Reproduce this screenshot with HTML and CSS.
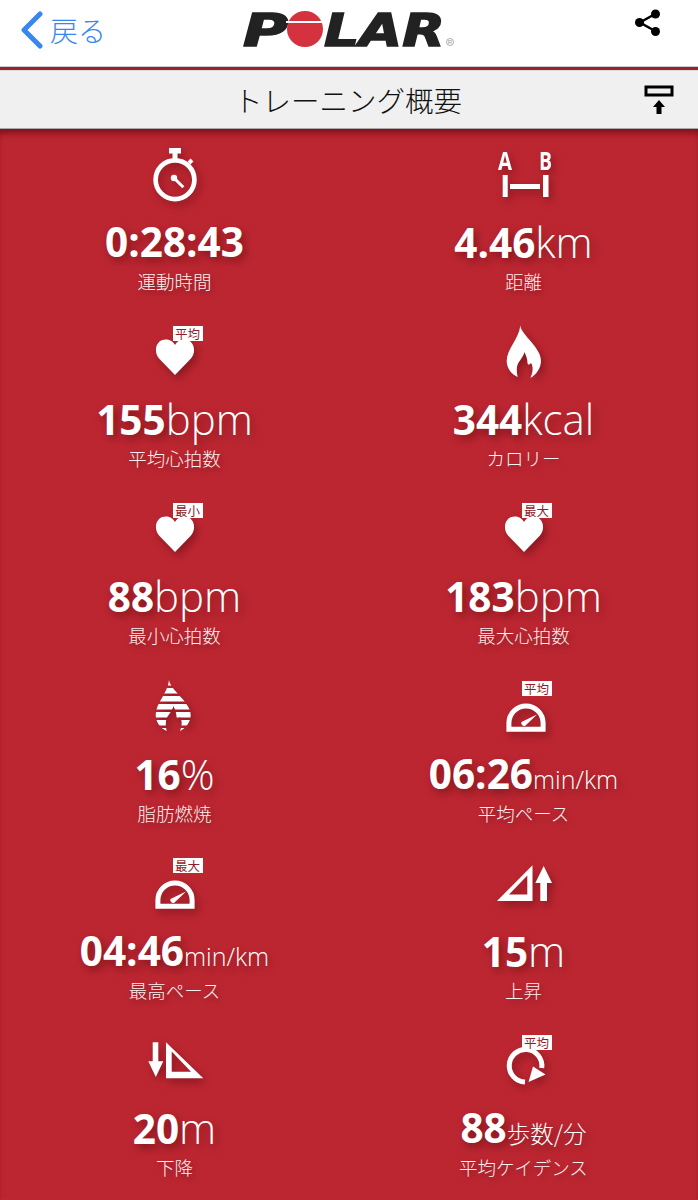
FILE: index.html
```html
<!DOCTYPE html>
<html lang="ja">
<head>
    <meta charset="UTF-8">
    <meta name="viewport" content="width=device-width, initial-scale=1.0">
    <title>トレーニング概要</title>
    <link rel="stylesheet" href="styles.css">
</head>
<body>

<svg class="defs" width="0" height="0">
    <symbol id="heart" viewBox="0 0 60 60">
        <path d="M30 54 L14.500 38 C8 31 10.500 18.500 21 18.500 C25.500 18.500 28.500 21 30 24 C31.500 21 34.500 18.500 39 18.500 C49.500 18.500 52 31 45.500 38 Z"/>
    </symbol>
    <symbol id="gauge" viewBox="0 0 60 60">
        <path d="M14.900 53.200 V47 A17.100 17.100 0 0 1 49.100 47 V53.200 Z" fill="none" stroke="#fff" stroke-width="5"/>
        <path d="M27.500 46 L43 38.500 L31 50 A3 3 0 0 1 27.500 46 Z"/>
    </symbol>
    <clipPath id="stripes">
        <path d="M24 4 C25 14 45.700 26 45.700 39 C45.700 46 41 52 35 55 C37 50 37.500 45 35 41 C33 43 32 43 31.500 41 C31.500 37 30 33 28.300 30 C28 35 22 39 21 45 C20.500 49 21 52 21.700 55 C15 52 10.700 46 10.700 39 C10.700 27 23 17 24 4 Z"/>
    </clipPath>
</svg>

<!-- Cabecera -->
<header class="topbar">
    <a class="back">
        <svg class="back-icon" width="24" height="38" viewBox="0 0 24 38"><path d="M20 3 L4 19 L20 35" fill="none" stroke="currentColor" stroke-width="5" stroke-linecap="round" stroke-linejoin="round"/></svg>
        <span>戻る</span>
    </a>
    <svg class="logo" width="216" height="66" viewBox="0 -10 216 66">
        <text class="logo-text" transform="translate(0 36) scale(1.4 1)">P</text>
        <circle cx="62" cy="19" r="18" fill="#d4323f"/>
        <rect x="43" y="11" width="38" height="2" fill="#fff"/>
        <text class="logo-text" transform="translate(81 36) scale(1.26 1)">LAR</text>
        <circle cx="207" cy="32" r="3.500" fill="none" stroke="#999" stroke-width="0.800"/>
        <text class="logo-mark" x="207" y="34" text-anchor="middle">R</text>
    </svg>
    <svg class="share" width="28" height="28" viewBox="0 0 28 28">
        <path d="M21 5 L6 13.500 L21 22" fill="none" stroke="#000" stroke-width="2.500"/>
        <circle cx="21.500" cy="5" r="4.500"/>
        <circle cx="5.500" cy="13.500" r="4.500"/>
        <circle cx="21.500" cy="22.500" r="4.500"/>
    </svg>
</header>

<div class="titlebar">
    <h1>トレーニング概要</h1>
    <svg class="print" width="30" height="30" viewBox="0 0 30 30">
        <rect x="2" y="2" width="26" height="8" fill="none" stroke="#000" stroke-width="3"/>
        <path d="M15 15 L21 22 H17.500 V29 H12.500 V22 H9 Z"/>
    </svg>
</div>

<main class="stats">

    <div class="stat">
        <div class="stat-icon">
            <svg width="60" height="60" viewBox="0 0 60 60">
                <rect x="24" y="4" width="12" height="5.500"/>
                <rect x="27.500" y="9" width="5" height="7"/>
                <path d="M44 19 L47 16" stroke="#fff" stroke-width="4"/>
                <circle cx="30" cy="35.700" r="19.400" fill="none" stroke="#fff" stroke-width="4.700"/>
                <circle cx="29" cy="34" r="3.200"/>
                <path d="M29 34 L38.300 43.300" stroke="#fff" stroke-width="3"/>
            </svg>
        </div>
        <div class="stat-value"><b>0:28:43</b></div>
        <div class="stat-label">運動時間</div>
    </div>

    <div class="stat">
        <div class="stat-icon">
            <svg width="60" height="60" viewBox="0 0 60 60">
                <text class="ab" x="4" y="26" textLength="14" lengthAdjust="spacingAndGlyphs">A</text>
                <text class="ab" x="45" y="26" textLength="13" lengthAdjust="spacingAndGlyphs">B</text>
                <rect x="8.700" y="31" width="5" height="22"/>
                <rect x="49" y="31" width="5.500" height="22"/>
                <rect x="16" y="40" width="30" height="5"/>
            </svg>
        </div>
        <div class="stat-value"><b>4.46</b><span class="unit">km</span></div>
        <div class="stat-label">距離</div>
    </div>

    <div class="stat">
        <div class="stat-icon">
            <svg width="60" height="60"><use href="#heart"/></svg>
            <span class="badge">平均</span>
        </div>
        <div class="stat-value"><b>155</b><span class="unit">bpm</span></div>
        <div class="stat-label">平均心拍数</div>
    </div>

    <div class="stat">
        <div class="stat-icon">
            <svg width="60" height="60" viewBox="0 0 60 60">
                <path d="M26.300 4.500 C27 14 47 26 47 40 C47 47 42 54 36.300 57 C39 52 39.500 46 37 42 C35 44 34 44 33.500 42 C33.500 38 32 34 30.300 31 C30 36 24 40 23 46 C22.500 50 23 53 23.700 56 C17 53 12.700 47 12.700 40 C12.700 28 25 18 26.300 4.500 Z"/>
            </svg>
        </div>
        <div class="stat-value"><b>344</b><span class="unit">kcal</span></div>
        <div class="stat-label">カロリー</div>
    </div>

    <div class="stat">
        <div class="stat-icon">
            <svg width="60" height="60"><use href="#heart"/></svg>
            <span class="badge">最小</span>
        </div>
        <div class="stat-value"><b>88</b><span class="unit">bpm</span></div>
        <div class="stat-label">最小心拍数</div>
    </div>

    <div class="stat">
        <div class="stat-icon">
            <svg width="60" height="60"><use href="#heart"/></svg>
            <span class="badge">最大</span>
        </div>
        <div class="stat-value"><b>183</b><span class="unit">bpm</span></div>
        <div class="stat-label">最大心拍数</div>
    </div>

    <div class="stat">
        <div class="stat-icon">
            <svg width="60" height="60" viewBox="0 0 60 60">
                <g clip-path="url(#stripes)">
                    <rect x="8" y="4" width="40" height="5.500"/>
                    <rect x="8" y="12" width="40" height="5.500"/>
                    <rect x="8" y="20" width="40" height="5.500"/>
                    <rect x="8" y="28" width="40" height="5.500"/>
                    <rect x="8" y="36" width="40" height="5.500"/>
                    <rect x="8" y="44" width="40" height="5.500"/>
                    <rect x="8" y="52" width="40" height="3"/>
                </g>
            </svg>
        </div>
        <div class="stat-value"><b>16</b><span class="unit">%</span></div>
        <div class="stat-label">脂肪燃焼</div>
    </div>

    <div class="stat">
        <div class="stat-icon">
            <svg width="60" height="60"><use href="#gauge"/></svg>
            <span class="badge">平均</span>
        </div>
        <div class="stat-value"><b>06:26</b><small>min/km</small></div>
        <div class="stat-label">平均ペース</div>
    </div>

    <div class="stat">
        <div class="stat-icon">
            <svg width="60" height="60" viewBox="2 0 60 60"><use href="#gauge" width="60" height="60"/></svg>
            <span class="badge">最大</span>
        </div>
        <div class="stat-value"><b>04:46</b><small>min/km</small></div>
        <div class="stat-label">最高ペース</div>
    </div>

    <div class="stat">
        <div class="stat-icon">
            <svg width="60" height="60" viewBox="0 0 60 60">
                <path fill-rule="evenodd" d="M3 47.900 L38.500 12.200 V47.900 Z M15 41.500 H33.300 V22.500 Z"/>
                <path d="M49.700 13 L58 30 H53 V47.900 H46.300 V30 H41.300 Z"/>
            </svg>
        </div>
        <div class="stat-value"><b>15</b><span class="unit">m</span></div>
        <div class="stat-label">上昇</div>
    </div>

    <div class="stat">
        <div class="stat-icon">
            <svg width="60" height="60" viewBox="0 0 60 60">
                <path d="M7.700 12.300 H13.300 V31.300 H18.300 L10.800 47 L3.300 31.300 H7.700 Z"/>
                <path fill-rule="evenodd" d="M21 12.300 L58.300 48.300 H21 Z M26.700 21.500 V41.800 H46 Z"/>
            </svg>
        </div>
        <div class="stat-value"><b>20</b><span class="unit">m</span></div>
        <div class="stat-label">下降</div>
    </div>

    <div class="stat">
        <div class="stat-icon">
            <svg width="60" height="60" viewBox="0 0 60 60">
                <path d="M47.700 38 A16.300 16.300 0 1 0 31 52" fill="none" stroke="#fff" stroke-width="5"/>
                <path d="M34.500 52 L39 36.500 L51.500 44.500 Z"/>
            </svg>
            <span class="badge">平均</span>
        </div>
        <div class="stat-value"><b>88</b><small class="cjk">歩数/分</small></div>
        <div class="stat-label">平均ケイデンス</div>
    </div>

</main>

</body>
</html>
```

FILE: styles.css
```css
html, body { margin: 0; padding: 0; height: 1200px; overflow: hidden; }
body { font-family: "Open Sans", "Noto Sans CJK JP", sans-serif; background-color: #bc2631; }
.defs { position: absolute; }

/* Cabecera */
.topbar { position: relative; display: flex; justify-content: center; align-items: flex-start; height: 66px; background-color: #fff; border-bottom: 1px solid #c9c9c9; }
.back { position: absolute; left: 20px; top: 11px; display: flex; align-items: center; gap: 6px; color: #3a86f0; font-family: "Noto Sans CJK JP", sans-serif; font-size: 28px; font-weight: 300; line-height: 38px; }
.back-icon { display: block; }
.logo { margin-left: 3px; }
.logo-text { font-family: "DejaVu Sans", sans-serif; font-weight: 700; font-style: italic; font-size: 44px; fill: #222; stroke: #222; stroke-width: 1.5px; }
.logo-mark { font-family: "Liberation Sans", sans-serif; font-size: 6px; fill: #999; }
.share { position: absolute; right: 36px; top: 9px; }

.titlebar { position: relative; display: flex; justify-content: center; align-items: center; height: 58px; background-color: #f0f0f0; border-top: 3px solid #a51f2b; border-bottom: 1px solid #aaa; box-shadow: inset 0 1px 0 #ddd; }
.titlebar h1 { margin: 0 2px 0 0; font-family: "Noto Sans CJK JP", sans-serif; font-size: 28.500px; font-weight: 300; color: #111; }
.print { position: absolute; right: 24px; top: 15px; }

/* Cuadricula de datos */
.stats { display: grid; grid-template-columns: 349px 349px; grid-auto-rows: 177.2px; height: 1070px; box-shadow: inset 0 7px 7px -3px rgba(80, 0, 10, 0.6); }
.stat { display: flex; flex-direction: column; align-items: center; padding-top: 15px; box-sizing: border-box; color: #fff; }
.stat-icon { position: relative; width: 60px; height: 60px; }
.stat-icon svg { display: block; fill: #fff; filter: drop-shadow(3px 4px 4px rgba(60, 0, 5, 0.4)); overflow: visible; }
.badge { position: absolute; left: 28px; top: 5px; width: 30px; height: 15px; background-color: #fff; color: #8f1c27; font-family: "Noto Sans CJK JP", sans-serif; font-size: 12.500px; line-height: 15px; text-align: center; }
.ab { font-family: "Open Sans", sans-serif; font-weight: 700; font-size: 25px; fill: #fff; }
.stat-value { margin-top: 13px; height: 50px; font-size: 40.500px; line-height: 50px; white-space: nowrap; text-shadow: 3px 4px 8px rgba(60, 0, 5, 0.45); }
.stat-value b { font-weight: 700; }
.unit { font-size: 42px; font-weight: 300; }
.stat-value small { font-size: 25px; font-weight: 300; }
.stat-value small.cjk { font-family: "Noto Sans CJK JP", sans-serif; font-size: 23.500px; }
.stat-label { margin-top: 1px; font-family: "Noto Sans CJK JP", sans-serif; font-size: 18.500px; line-height: 26px; font-weight: 300; color: #fdf0f0; text-shadow: 2px 3px 6px rgba(60, 0, 5, 0.4); }
```
